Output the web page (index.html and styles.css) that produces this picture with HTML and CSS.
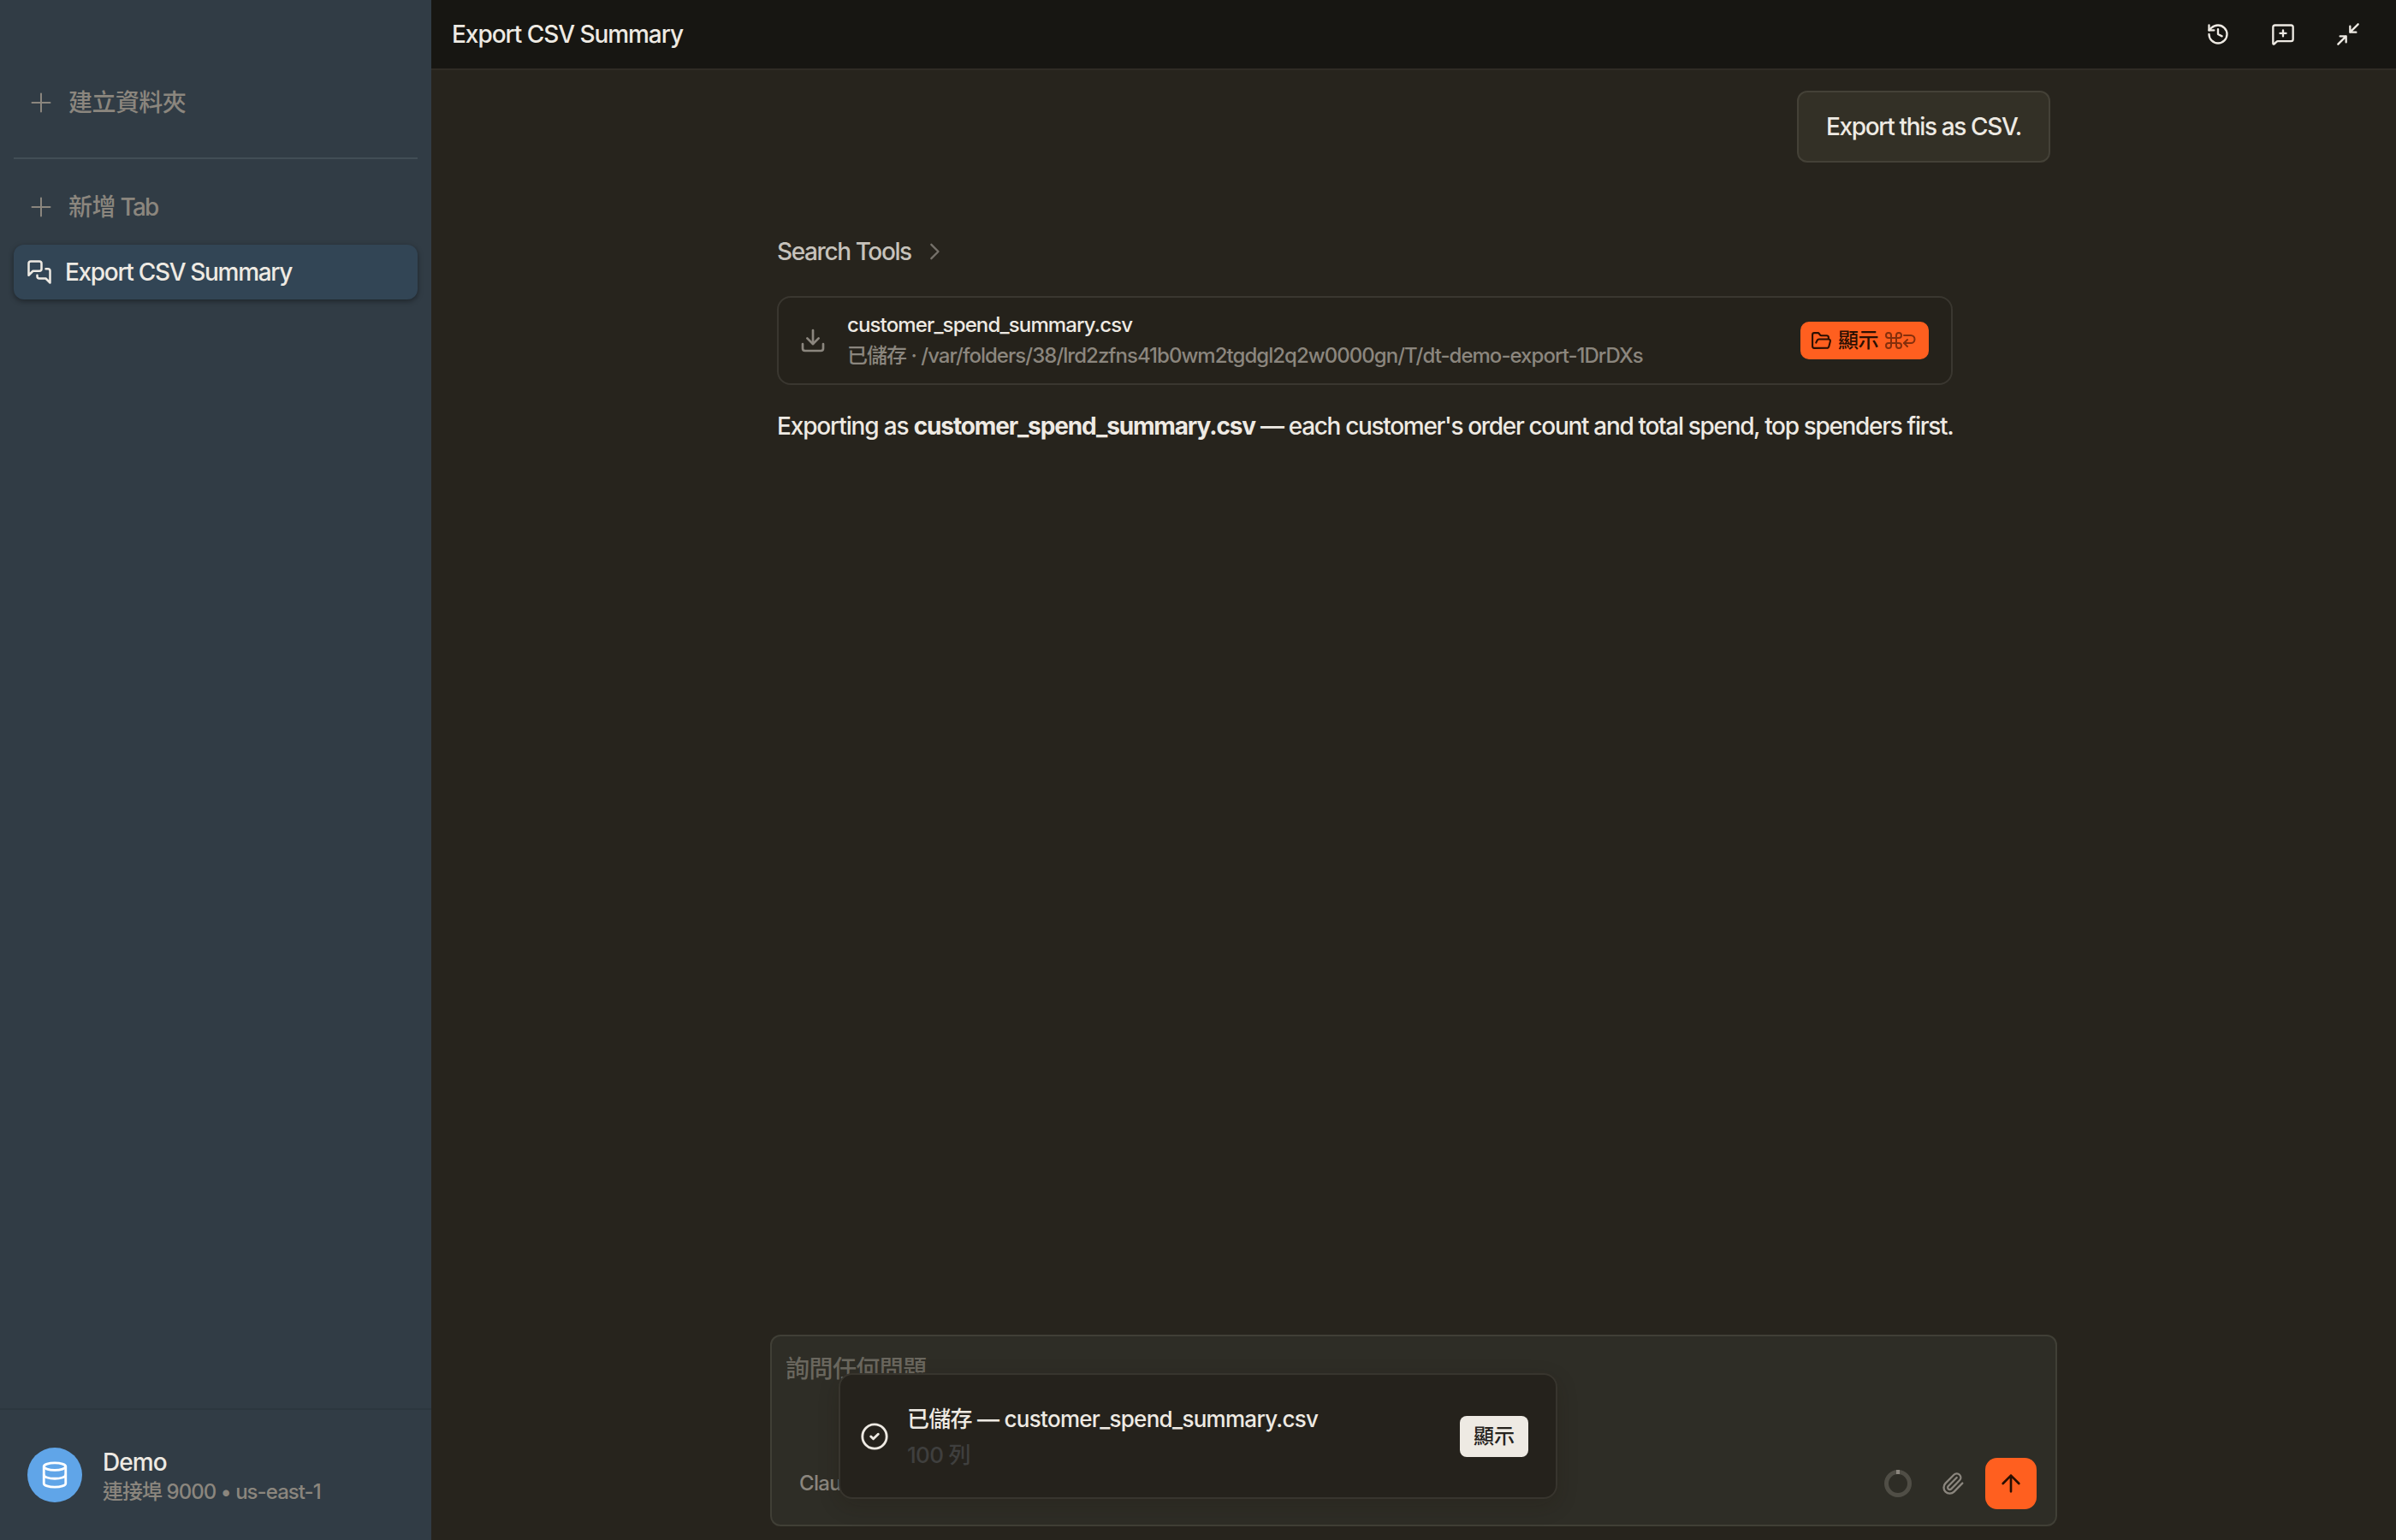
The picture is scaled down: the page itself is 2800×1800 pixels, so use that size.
FILE: index.html
```html
<!DOCTYPE html>
<html lang="zh-Hant">
<head>
  <meta charset="UTF-8" />
  <meta name="viewport" content="width=device-width, initial-scale=1.0"/>
  <title>Export CSV Summary</title>
  <link rel="stylesheet" href="styles.css">
</head>
<body>
  <div class="app">
    <aside class="sidebar">
      <nav class="side-nav">
        <button class="side-item new-folder">
          <svg class="icon plus" viewBox="0 0 24 24"><path d="M1.5 12h21M12 1.5v21"/></svg>
          <span>建立資料夾</span>
        </button>
        <hr>
        <button class="side-item new-tab">
          <svg class="icon plus" viewBox="0 0 24 24"><path d="M1.5 12h21M12 1.5v21"/></svg>
          <span>新增<span class="latin"> Tab</span></span>
        </button>
        <a class="side-item active">
          <svg class="icon chats" viewBox="0 0 24 24"><path d="M14 9a2 2 0 0 1-2 2H6l-4 4V4a2 2 0 0 1 2-2h8a2 2 0 0 1 2 2z"/><path d="M18 9h2a2 2 0 0 1 2 2v11l-4-4h-6a2 2 0 0 1-2-2v-1"/></svg>
          <span>Export CSV Summary</span>
        </a>
      </nav>
      <div class="account">
        <div class="avatar">
          <svg class="icon" viewBox="0 0 24 24"><ellipse cx="12" cy="5" rx="9" ry="3"/><path d="M3 5v14a9 3 0 0 0 18 0V5"/><path d="M3 12a9 3 0 0 0 18 0"/></svg>
        </div>
        <div class="account-text">
          <div class="account-name">Demo</div>
          <div class="account-info">連接埠 9000 • us-east-1</div>
        </div>
      </div>
    </aside>

    <main class="main">
      <header class="topbar">
        <h1>Export CSV Summary</h1>
        <div class="topbar-actions">
          <svg class="icon" viewBox="0 0 24 24"><path d="M3 12a9 9 0 1 0 9-9 9.75 9.75 0 0 0-6.74 2.74L3 8"/><path d="M3 3v5h5"/><path d="M12 7v5l4 2"/></svg>
          <svg class="icon" viewBox="0 0 24 24"><path d="M22 17a2 2 0 0 1-2 2H6.8a2 2 0 0 0-1.4.6l-2.2 2.2A.7.7 0 0 1 2 21.3V5a2 2 0 0 1 2-2h16a2 2 0 0 1 2 2z"/><path d="M12 8v6M9 11h6"/></svg>
          <svg class="icon" viewBox="0 0 24 24"><path d="M14 4v6h6M22 2l-8 8M4 14h6v6M2 22l8-8"/></svg>
        </div>
      </header>

      <section class="thread">
        <div class="bubble">Export this as CSV.</div>

        <div class="reply">
          <div class="tools">
            <span>Search Tools</span>
            <svg class="icon" viewBox="0 0 24 24"><path d="m8 19 7-7-7-7"/></svg>
          </div>

          <div class="file-card">
            <svg class="icon download" viewBox="0 0 24 24"><path d="M12 3v12"/><path d="m7 10 5 5 5-5"/><path d="M21 15v4a2 2 0 0 1-2 2H5a2 2 0 0 1-2-2v-4"/></svg>
            <div class="file-text">
              <div class="file-name">customer_spend_summary.csv</div>
              <div class="file-path">已儲存 · /var/folders/38/lrd2zfns41b0wm2tgdgl2q2w0000gn/T/dt-demo-export-1DrDXs</div>
            </div>
            <button class="reveal">
              <svg class="icon folder" viewBox="0 0 24 24"><path d="m6 14 1.5-2.9A2 2 0 0 1 9.24 10H20a2 2 0 0 1 1.94 2.5l-1.54 6a2 2 0 0 1-1.95 1.5H4a2 2 0 0 1-2-2V5a2 2 0 0 1 2-2h3.9a2 2 0 0 1 1.69.9l.81 1.2a2 2 0 0 0 1.67.9H18a2 2 0 0 1 2 2v2"/></svg>
              <span>顯示</span>
              <span class="keys">
                <svg class="icon cmd" viewBox="0 0 24 24"><path d="M15 6v12a3 3 0 1 0 3-3H6a3 3 0 1 0 3 3V6a3 3 0 1 0-3 3h12a3 3 0 1 0-3-3"/></svg>
                <svg class="icon enter" viewBox="0 0 16 18"><path d="M2 3h8a4.5 4.5 0 0 1 0 9H2"/><path d="M6 8l-4 4 4 4"/></svg>
              </span>
            </button>
          </div>

          <p class="answer">Exporting as <strong>customer_spend_summary.csv</strong><span class="detail"> — each customer's order count and total spend, top spenders first.</span></p>
        </div>
      </section>

      <section class="composer">
        <div class="placeholder">詢問任何問題</div>
        <div class="composer-bar">
          <span class="model">Claude</span>
          <svg class="ring" viewBox="0 0 32 32"><circle cx="16" cy="16" r="13.5"/><path d="M14 2.5h4"/></svg>
          <svg class="icon clip" viewBox="0 0 24 24"><path d="m16 6-8.414 8.586a2 2 0 0 0 2.829 2.829l8.414-8.586a4 4 0 1 0-5.657-5.657l-8.379 8.551a6 6 0 1 0 8.485 8.485l8.379-8.551"/></svg>
          <button class="send">
            <svg class="icon" viewBox="0 0 24 24"><path d="m5 12 7-7 7 7M12 19V5"/></svg>
          </button>
        </div>

        <div class="toast">
          <svg class="icon" viewBox="0 0 24 24"><circle cx="12" cy="12" r="10"/><path d="m9 12 2 2 4-4"/></svg>
          <div class="toast-text">
            <div class="toast-title">已儲存 — customer_spend_summary.csv</div>
            <div class="toast-desc">100 列</div>
          </div>
          <button class="toast-btn">顯示</button>
        </div>
      </section>
    </main>
  </div>
</body>
</html>
```
FILE: styles.css
```css
*,
*::before,
*::after {
  margin: 0;
  padding: 0;
  box-sizing: border-box;
}

body {
  height: 100vh;
  overflow: hidden;
  background: #27241d;
  color: #eeeae3;
  font-family: Inter, "Noto Sans CJK TC", sans-serif;
  font-size: 28px;
  font-weight: 450;
  line-height: 40px;
  letter-spacing: -1.15px;
}

button {
  border: none;
  background: none;
  color: inherit;
  font: inherit;
  letter-spacing: inherit;
}

.icon {
  flex: none;
  fill: none;
  stroke: currentColor;
  stroke-width: 2;
  stroke-linecap: round;
  stroke-linejoin: round;
}

.app {
  display: flex;
  height: 100%;
}

/* sidebar */
.sidebar {
  display: flex;
  flex-direction: column;
  justify-content: space-between;
  width: 504px;
  background: #313c45;
}

.side-nav {
  display: flex;
  flex-direction: column;
  padding: 88px 16px 0;
}

.side-nav hr {
  height: 2px;
  margin: 32px 0 24px;
  border: none;
  background: #424e56;
}

.side-item {
  display: flex;
  align-items: center;
  height: 64px;
  padding-left: 20px;
  gap: 20px;
  border-radius: 12px;
  color: #8b867e;
  letter-spacing: -0.56px;
}

.latin {
  letter-spacing: -1.8px;
}

.new-tab {
  margin-bottom: 12px;
}

.plus {
  width: 24px;
  height: 24px;
}

.side-item.active {
  padding-left: 15px;
  gap: 15px;
  background: #324555;
  color: #eeeae3;
  letter-spacing: -1.33px;
  box-shadow: 0 2px 6px rgba(0, 0, 0, 0.4);
}

.chats {
  width: 30px;
  height: 30px;
}

.account {
  display: flex;
  align-items: center;
  height: 154px;
  padding: 0 32px;
  gap: 24px;
  border-top: 2px solid #2c373f;
}

.avatar {
  display: flex;
  align-items: center;
  justify-content: center;
  width: 64px;
  height: 64px;
  border-radius: 50%;
  background: #60a5e8;
  color: #fff;
}

.avatar .icon {
  width: 34px;
  height: 34px;
}

.account-text {
  padding-top: 3px;
}

.account-name {
  line-height: 36px;
  font-weight: 550;
  letter-spacing: -0.95px;
}

.account-info {
  font-size: 24px;
  line-height: 34px;
  letter-spacing: -0.95px;
  color: #8b867e;
}

/* main column */
.main {
  flex: 1;
  display: flex;
  flex-direction: column;
}

.topbar {
  display: flex;
  align-items: center;
  justify-content: space-between;
  height: 82px;
  padding: 0 42px 0 24px;
  background: #171612;
  border-bottom: 2px solid #2f2c25;
}

.topbar h1 {
  font-size: 28px;
  font-weight: 550;
  letter-spacing: -1.05px;
}

.topbar-actions {
  display: flex;
  gap: 48px;
}

.topbar-actions .icon {
  width: 28px;
  height: 28px;
}

.thread {
  flex: 1;
  display: flex;
  flex-direction: column;
  width: 1504px;
  margin: 0 0 0 396px;
  padding: 24px 8px 0;
}

.bubble {
  align-self: flex-end;
  height: 84px;
  padding: 20px 32px;
  border: 2px solid #444137;
  border-radius: 12px;
  background: #333026;
  letter-spacing: -1.35px;
  white-space: nowrap;
}

.reply {
  width: 1374px;
  margin-top: 84px;
}

.tools {
  display: flex;
  align-items: center;
  gap: 14px;
  color: #c6c2bb;
  letter-spacing: -1.4px;
}

.tools .icon {
  width: 28px;
  height: 28px;
  color: #75716a;
}

.file-card {
  display: flex;
  align-items: center;
  height: 104px;
  margin-top: 32px;
  padding: 0 26px 0 24px;
  border: 2px solid #3a3730;
  border-radius: 16px;
  background: #25221b;
}

.download {
  width: 32px;
  height: 32px;
  color: #8b867e;
}

.file-text {
  flex: 1;
  margin-left: 24px;
  font-size: 24px;
  line-height: 36px;
}

.file-name {
  font-weight: 550;
  letter-spacing: -0.87px;
}

.file-path {
  color: #8b867e;
  letter-spacing: -0.97px;
}

.reveal {
  display: flex;
  align-items: center;
  width: 150px;
  height: 44px;
  padding-left: 12px;
  border-radius: 10px;
  background: #ff5f1f;
  color: #2a0f02;
  font-size: 24px;
  font-weight: 500;
  letter-spacing: -0.5px;
}

.folder {
  width: 25px;
  height: 25px;
  margin-right: 7px;
}

.keys {
  display: flex;
  align-items: center;
  margin-left: 6px;
  color: #852f0c;
}

.cmd {
  width: 24px;
  height: 24px;
}

.enter {
  width: 16px;
  height: 18px;
  margin-left: -2px;
}

.answer {
  margin-top: 28px;
  white-space: nowrap;
}

.answer .detail {
  letter-spacing: -1.33px;
}

/* composer */
.composer {
  position: relative;
  display: flex;
  flex-direction: column;
  justify-content: space-between;
  width: 1504px;
  height: 224px;
  margin: 0 0 16px 396px;
  padding: 18px 22px 18px 16px;
  border: 2px solid #403f36;
  border-radius: 12px;
  background: #2e2d26;
}

.placeholder {
  color: #6a675e;
  letter-spacing: -0.56px;
}

.composer-bar {
  display: flex;
  align-items: center;
}

.model {
  flex: 1;
  padding-left: 16px;
  font-size: 24px;
  letter-spacing: -0.7px;
  color: #8b867e;
}

.ring {
  width: 32px;
  height: 32px;
  margin-right: 34px;
  fill: none;
  stroke: #504e46;
  stroke-width: 5;
}

.ring path {
  stroke: #8b867e;
}

.clip {
  width: 28px;
  height: 28px;
  margin-right: 24px;
  color: #8b867e;
}

.send {
  display: flex;
  align-items: center;
  justify-content: center;
  width: 60px;
  height: 60px;
  border-radius: 14px;
  background: #ff5f1f;
  color: #2a0f02;
}

.send .icon {
  width: 32px;
  height: 32px;
}

/* toast covers the composer */
.toast {
  position: absolute;
  left: 78px;
  top: 43px;
  display: flex;
  align-items: center;
  width: 840px;
  height: 147px;
  padding: 0 32px 0 23px;
  border: 2px solid #38352e;
  border-radius: 16px;
  background: #25221c;
  box-shadow: 0 8px 24px rgba(30, 20, 10, 0.2);
  letter-spacing: -0.72px;
}

.toast > .icon {
  width: 34px;
  height: 34px;
}

.toast-text {
  flex: 1;
  margin-left: 21px;
  padding-top: 2px;
  font-size: 26px;
}

.toast-title {
  font-weight: 550;
}

.toast-desc {
  padding-top: 2px;
  color: #3f3f3e;
}

.toast-btn {
  width: 80px;
  height: 48px;
  border-radius: 8px;
  background: #eeeae3;
  color: #25221c;
  font-size: 24px;
  font-weight: 500;
  letter-spacing: 0;
}
```
